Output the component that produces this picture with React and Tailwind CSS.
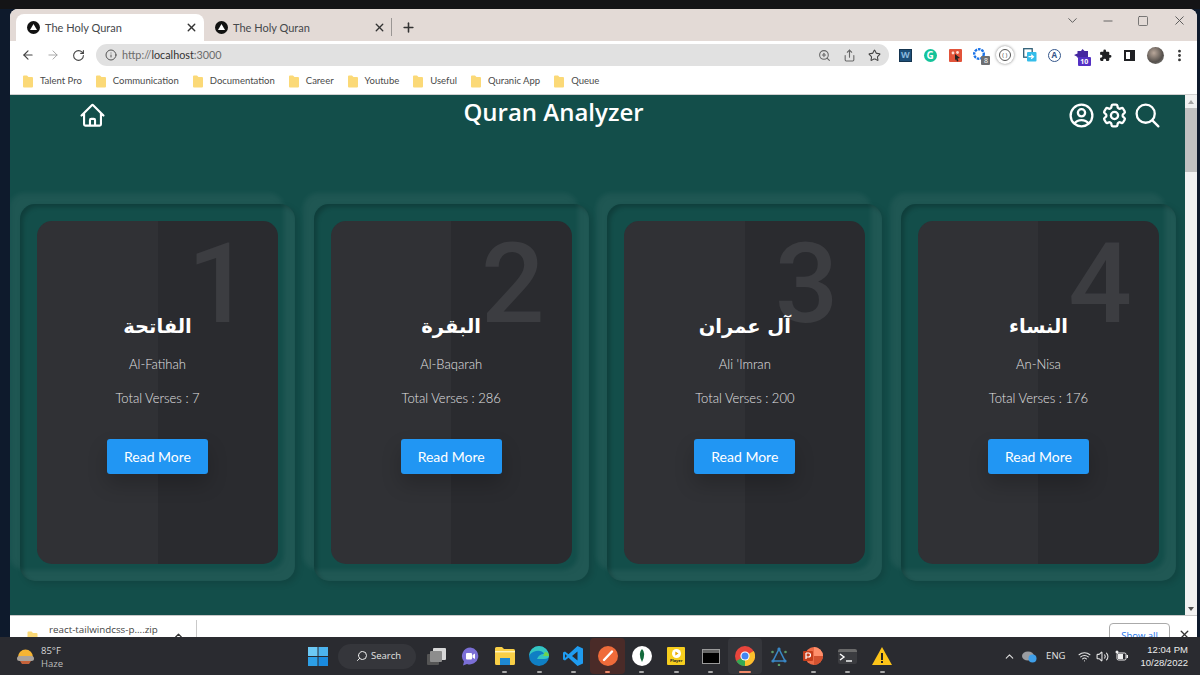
import React from 'react';
import { ArrowLeft, ArrowRight, ChevronDown, ChevronUp, Info, Minus, MoreVertical, Plus, RotateCw, Search, Share, Square, Star, Volume2, Wifi, X, ZoomIn } from 'lucide-react';
import { HiOutlineCog6Tooth, HiOutlineHome, HiOutlineMagnifyingGlass, HiOutlineUserCircle } from 'react-icons/hi2';

const bookmarks = ['Talent Pro', 'Communication', 'Documentation', 'Career', 'Youtube', 'Useful', 'Quranic App', 'Queue'];

const surahs = [
    { n: 1, ar: 'الفاتحة', en: 'Al-Fatihah', verses: 7 },
    { n: 2, ar: 'البقرة', en: 'Al-Baqarah', verses: 286 },
    { n: 3, ar: 'آل عمران', en: "Ali 'Imran", verses: 200 },
    { n: 4, ar: 'النساء', en: 'An-Nisa', verses: 176 },
];

function Favicon() {
    return (
        <svg width="13" height="13" viewBox="0 0 13 13" className="shrink-0">
            <circle cx="6.5" cy="6.5" r="6.5" fill="#111" />
            <path d="M6.5 3 L10 9 H3 Z" fill="#fff" />
        </svg>
    );
}

function Tab({ active }) {
    return (
        <div className={`flex items-center w-[188px] h-[27px] pl-[11px] pr-[6px] rounded-t-lg ${active ? 'bg-white' : ''}`}>
            <Favicon />
            <span className="ml-[5px] pt-[1px] text-[11px] text-[#45484c] flex-1 font-['Lato',sans-serif]">The Holy Quran</span>
            <X size={13} strokeWidth={2.5} className="text-[#333]" />
        </div>
    );
}

function Folder({ small }) {
    return (
        <svg width={small ? 13 : 10} height="13" viewBox="0 0 10 13" className="shrink-0">
            <path d="M0 1.5 Q0 .5 1 .5 H4 L5.5 2 H9 Q10 2 10 3 V11.5 Q10 12.5 9 12.5 H1 Q0 12.5 0 11.5 Z" fill="#fbd977" />
        </svg>
    );
}

function Extensions() {
    return (
        <div className="flex items-center ml-auto h-[26px] relative w-[299px]">
            <div className="flex items-center justify-center w-[25px] h-[25px]">
                <div className="w-[13px] h-[13px] bg-[#1d4f79] text-[9px] font-bold text-[#8ab8dd] flex items-center justify-center border border-[#14344f]">W</div>
            </div>
            <div className="flex items-center justify-center w-[25px] h-[25px]">
                <div className="w-[13px] h-[13px] rounded-full bg-[#15c39a] text-[10px] font-bold text-white flex items-center justify-center leading-none">G</div>
            </div>
            <div className="flex items-center justify-center w-[25px] h-[25px]">
                <svg width="13" height="13" viewBox="0 0 13 13">
                    <rect width="13" height="13" rx="1" fill="#e2533a" />
                    <circle cx="4" cy="4" r="1.4" fill="#fbdcd2" />
                    <circle cx="8.5" cy="3.5" r="1.4" fill="#fbdcd2" />
                    <path d="M6 5 L11 9 L8.5 9.6 L9.5 12 L8 12.4 L7 10 L6 11.5 Z" fill="#222" />
                </svg>
            </div>
            <div className="flex items-center justify-center w-[25px] h-[25px] relative">
                <svg width="16" height="16" viewBox="0 0 16 16">
                    <circle cx="7" cy="7" r="4.8" fill="none" stroke="#1a73e8" strokeWidth="2.4" strokeDasharray="2.6 .9" />
                </svg>
                <span className="absolute left-[14px] top-[13px] w-[9px] h-[9px] bg-[#6d6f72] text-white text-[7px] leading-[9px] text-center rounded-[1px]">8</span>
            </div>
            <div className="flex items-center justify-center w-[25px] h-[25px]">
                <div className="w-[18px] h-[18px] rounded-full bg-white shadow-[0_0_3px_rgba(0,0,0,0.5)] flex items-center justify-center">
                    <div className="w-[12px] h-[12px] rounded-full border border-[#555] flex items-center justify-center text-[6px] text-[#444] leading-none">( )</div>
                </div>
            </div>
            <div className="flex items-center justify-center w-[25px] h-[25px]">
                <svg width="14" height="14" viewBox="0 0 14 14">
                    <rect x=".7" y=".7" width="8.5" height="8.5" fill="none" stroke="#2f5f77" strokeWidth="1.3" />
                    <rect x="4" y="4" width="9.5" height="9.5" rx="1" fill="#35bdea" />
                    <path d="M5.5 8.7 H10 M8.2 6.7 L10.5 8.7 L8.2 10.7" fill="none" stroke="#fff" strokeWidth="1.2" />
                </svg>
            </div>
            <div className="flex items-center justify-center w-[25px] h-[25px]">
                <div className="w-[13px] h-[13px] rounded-full border border-[#34568b] flex items-center justify-center text-[8px] font-bold text-[#34568b] leading-none">A</div>
            </div>
            <div className="flex items-center justify-center w-[28px] h-[25px] relative">
                <svg width="14" height="13" viewBox="0 0 14 13">
                    <path d="M0 6 L3.5 4.5 L3.5 2 L7 2 L8.5 0 L10.5 2 L14 2 L14 9 L3.5 9 L3.5 8 Z" fill="#4527a0" />
                </svg>
                <span className="absolute left-[11px] top-[14px] w-[13px] h-[9px] bg-[#5431c4] text-white text-[7px] font-bold leading-[9px] text-center rounded-[1px]">10</span>
            </div>
            <div className="flex items-center justify-center w-[22px] h-[25px]">
                <svg width="13" height="13" viewBox="0 0 24 24" fill="#202124">
                    <path d="M20.5 11H19V7a2 2 0 0 0-2-2h-4V3.5a2.5 2.5 0 0 0-5 0V5H4a2 2 0 0 0-2 2v3.8h1.5a2.7 2.7 0 0 1 0 5.4H2V20a2 2 0 0 0 2 2h3.8v-1.5a2.7 2.7 0 0 1 5.4 0V22H17a2 2 0 0 0 2-2v-4h1.5a2.5 2.5 0 0 0 0-5z" />
                </svg>
            </div>
            <div className="flex items-center justify-center w-[27px] h-[25px]">
                <div className="w-[11px] h-[11px] border-2 border-[#202124] border-r-[5px]" />
            </div>
            <div className="flex items-center justify-center w-[24px] h-[25px]">
                <div className="w-[17px] h-[17px] rounded-full bg-[radial-gradient(circle_at_40%_35%,#b9a79a,#55504c_60%,#8c8f8d)]" />
            </div>
            <div className="flex items-center justify-center w-[25px] h-[25px]">
                <MoreVertical size={15} strokeWidth={2.5} className="text-[#333]" />
            </div>
        </div>
    );
}

function Card({ surah }) {
    return (
        <div className="w-[275px] h-[377px] shrink-0 p-[17px] rounded-[15px] shadow-[inset_3px_3px_4px_rgba(0,0,0,0.2),inset_-11px_-11px_5px_rgba(255,255,255,0.06),3px_3px_6px_rgba(0,0,0,0.12),-11px_-11px_5px_rgba(255,255,255,0.05)]">
            <div className="relative h-full rounded-[15px] bg-[#2a2b2f] flex flex-col items-center font-['Lato',sans-serif]">
                <div className="absolute inset-y-0 left-0 w-1/2 rounded-l-[15px] bg-white/[0.03]" />
                <div className="absolute right-[27px] top-[13px] text-[112px] leading-[100px] font-medium text-[#3c3d41] font-['Roboto',sans-serif]">
                    {surah.n}
                </div>
                <h2 dir="rtl" className="relative mt-[88px] h-[36px] text-[19.5px] leading-[36px] font-semibold text-white font-['DejaVu_Sans',sans-serif]">
                    {surah.ar}
                </h2>
                <p className="relative mt-[9px] text-[13px] leading-[20px] font-light text-[#e2e2e4]">{surah.en}</p>
                <p className="relative mt-[14px] text-[13px] leading-[20px] font-light text-[#e2e2e4]">Total Verses : {surah.verses}</p>
                <button className="relative mt-[31px] w-[101px] h-[35px] rounded-[3px] bg-[#2196f3] text-white text-[14px] shadow-[0_10px_20px_rgba(0,0,0,0.2)]">
                    Read More
                </button>
            </div>
        </div>
    );
}

function TaskIcon({ children, bar, bg }) {
    return (
        <div className={`relative flex items-center justify-center w-[34.3px] h-[36px] rounded ${bg || ''}`}>
            {children}
            {bar && <span className={`absolute bottom-[1px] h-[2px] rounded-sm ${bar}`} />}
        </div>
    );
}

function Taskbar() {
    return (
        <div className="h-[38px] bg-[#2a2b30] flex items-center text-[#e8e8e8] relative">
            <div className="w-[308px] flex items-center pl-[16px] shrink-0">
                <svg width="19" height="17" viewBox="0 0 19 17">
                    <path d="M2 9 A7 7 0 0 1 17 9 Z" fill="#f5b433" />
                    <rect x="1" y="8" width="17" height="5" rx="2.5" fill="#aaa39c" />
                    <path d="M4 13 H15 L13 16 H6 Z" fill="#c4623a" />
                </svg>
                <div className="ml-[6px] text-[9.5px] leading-[13px] text-[#d8d8d8] pt-[1px]">
                    <div>85°F</div>
                    <div className="text-[#bdbdbd]">Haze</div>
                </div>
            </div>
            <svg width="20" height="19" viewBox="0 0 20 19" className="shrink-0">
                <rect width="9.5" height="9" fill="#6cc9f5" />
                <rect x="10.5" width="9.5" height="9" fill="#4cb4ef" />
                <rect y="10" width="9.5" height="9" fill="#2d9fe6" />
                <rect x="10.5" y="10" width="9.5" height="9" fill="#1a8be0" />
            </svg>
            <div className="ml-[10px] w-[78px] h-[25px] rounded-full bg-[#35363b] flex items-center pl-[18px] shrink-0">
                <Search size={12} strokeWidth={2} className="-scale-x-100 text-[#eee]" />
                <span className="ml-[3px] text-[9.5px] text-[#e4e4e4]">Search</span>
            </div>
            <div className="ml-[3px] flex items-center">
                <TaskIcon>
                    <svg width="19" height="17" viewBox="0 0 19 17">
                        <rect x="0" y="6" width="12" height="11" rx="1" fill="#555" />
                        <rect x="6" y="0" width="13" height="12" rx="1" fill="#d8d8d8" />
                        <rect x="3" y="3" width="12" height="11" rx="1" fill="#8d8d8d" />
                    </svg>
                </TaskIcon>
                <TaskIcon>
                    <svg width="19" height="19" viewBox="0 0 19 19">
                        <path d="M9.5 .5 A8.5 8.5 0 1 1 6 17 L2 18.5 L3 14.5 A8.5 8.5 0 0 1 9.5 .5 Z" fill="#7b6fd6" />
                        <rect x="5" y="6" width="6" height="6.5" rx="1" fill="#fff" />
                        <path d="M11.5 8 L14 6.5 V12 L11.5 10.5 Z" fill="#fff" />
                    </svg>
                </TaskIcon>
                <TaskIcon bar="w-[5px] bg-[#a8a8a8]">
                    <svg width="20" height="18" viewBox="0 0 20 18">
                        <path d="M0 1.5 Q0 0 1.5 0 H7 L9 2 H18.5 Q20 2 20 3.5 V16.5 Q20 18 18.5 18 H1.5 Q0 18 0 16.5 Z" fill="#f9cf47" />
                        <rect x="0" y="4" width="20" height="1.4" fill="#fff2b8" />
                        <rect x="5" y="11" width="10" height="7" fill="#1e88d2" />
                    </svg>
                </TaskIcon>
                <TaskIcon bar="w-[5px] bg-[#a8a8a8]">
                    <svg width="20" height="20" viewBox="0 0 20 20">
                        <circle cx="10" cy="10" r="10" fill="#0f7fc4" />
                        <path d="M10 0 A10 10 0 0 1 20 10 Q20 13 15 13 H8 Q10 8 15 8 Q13 4 7 5 Q2 6 0 10 A10 10 0 0 1 10 0 Z" fill="#35c6c0" />
                        <path d="M20 10 Q20 6 16 6 L14 10 H20 Z" fill="#6ed34c" />
                    </svg>
                </TaskIcon>
                <TaskIcon bar="w-[5px] bg-[#a8a8a8]">
                    <svg width="20" height="20" viewBox="0 0 20 20">
                        <path d="M14.5 0 L20 2.6 V17.4 L14.5 20 L5.5 11.8 L2 14.6 L0 13.4 V6.6 L2 5.4 L5.5 8.2 Z M14.5 5.5 L9 10 L14.5 14.5 Z M2 8 V12 L4 10 Z" fill="#1f9cf0" fillRule="evenodd" />
                    </svg>
                </TaskIcon>
                <TaskIcon bar="w-[5px] bg-[#f08a6a]" bg="bg-[#4a2b28]">
                    <svg width="20" height="20" viewBox="0 0 20 20">
                        <circle cx="10" cy="10" r="10" fill="#ef6b3a" />
                        <path d="M6 14 L14 5.5" stroke="#fff" strokeWidth="2.4" strokeLinecap="round" />
                    </svg>
                </TaskIcon>
                <TaskIcon bar="w-[5px] bg-[#a8a8a8]">
                    <svg width="20" height="20" viewBox="0 0 20 20">
                        <circle cx="10" cy="10" r="10" fill="#fff" />
                        <path d="M10 3 Q14.5 7 10 16 Q5.5 7 10 3 Z" fill="#136b3c" />
                    </svg>
                </TaskIcon>
                <TaskIcon bar="w-[5px] bg-[#a8a8a8]">
                    <div className="w-[18px] h-[18px] bg-[#f7ce1e] flex flex-col items-center justify-center rounded-[1px]">
                        <svg width="9" height="9" viewBox="0 0 9 9">
                            <circle cx="4.5" cy="4.5" r="4.5" fill="#fff" />
                            <path d="M3.3 2.4 L6.5 4.5 L3.3 6.6 Z" fill="#e8a800" />
                        </svg>
                        <span className="text-[4px] leading-[5px] text-[#222] font-bold">Player</span>
                    </div>
                </TaskIcon>
                <TaskIcon bar="w-[5px] bg-[#a8a8a8]">
                    <div className="w-[18px] h-[15px] bg-black border border-[#9a9a9a]">
                        <div className="h-[3px] bg-[#666]" />
                    </div>
                </TaskIcon>
                <TaskIcon bar="w-[12px] bg-[#f08a6a]" bg="bg-[#35363b]">
                    <svg width="20" height="20" viewBox="0 0 20 20">
                        <circle cx="10" cy="10" r="10" fill="#e8453c" />
                        <path d="M10 10 L18.7 5 A10 10 0 0 1 10 20 Z" fill="#fbc02d" />
                        <path d="M10 10 L10 20 A10 10 0 0 1 1.3 15 Z" fill="#34a853" />
                        <circle cx="10" cy="10" r="4.6" fill="#fff" />
                        <circle cx="10" cy="10" r="3.5" fill="#4285f4" />
                    </svg>
                </TaskIcon>
                <TaskIcon>
                    <svg width="20" height="20" viewBox="0 0 20 20">
                        <path d="M10 3 L16 15 H4 Z" fill="none" stroke="#3a87c5" strokeWidth="1.6" />
                        <circle cx="10" cy="3" r="1.6" fill="#3a87c5" />
                        <circle cx="4" cy="15" r="1.6" fill="#3a87c5" />
                        <circle cx="16" cy="15" r="1.6" fill="#3a87c5" />
                        <circle cx="3.5" cy="6" r="1.3" fill="#5b9b6b" />
                        <circle cx="16.5" cy="6" r="1.3" fill="#5b9b6b" />
                        <circle cx="10" cy="19" r="1.3" fill="#5b9b6b" />
                    </svg>
                </TaskIcon>
                <TaskIcon bar="w-[5px] bg-[#a8a8a8]">
                    <svg width="20" height="20" viewBox="0 0 20 20">
                        <circle cx="11" cy="10" r="9" fill="#ed6c47" />
                        <path d="M11 1 A9 9 0 0 1 20 10 H11 Z" fill="#ff8f6b" />
                        <path d="M11 10 H20 A9 9 0 0 1 11 19 Z" fill="#d35230" />
                        <rect x="0" y="5" width="10" height="10" rx="1" fill="#c43e1c" />
                        <path d="M3 7 V13 M3 7 H5.5 Q7.5 7 7.5 9 Q7.5 11 5.5 11 H3" fill="none" stroke="#fff" strokeWidth="1.2" />
                    </svg>
                </TaskIcon>
                <TaskIcon bar="w-[5px] bg-[#a8a8a8]">
                    <div className="w-[19px] h-[15px] bg-[#3b3c40] rounded-[2px] relative border-t-[3px] border-[#6a6a6a]">
                        <svg width="19" height="12" viewBox="0 0 19 12" className="absolute top-0 left-0">
                            <path d="M2 2 L6 5 L2 8" fill="none" stroke="#fff" strokeWidth="1.4" />
                            <path d="M8 9 H14" stroke="#fff" strokeWidth="1.4" />
                        </svg>
                    </div>
                </TaskIcon>
                <TaskIcon bar="w-[5px] bg-[#a8a8a8]">
                    <svg width="20" height="18" viewBox="0 0 20 18">
                        <path d="M10 0 L20 18 H0 Z" fill="#fcc419" />
                        <rect x="9" y="6" width="2" height="7" fill="#222" />
                        <rect x="9" y="14" width="2" height="2" fill="#222" />
                    </svg>
                </TaskIcon>
            </div>
            <div className="ml-auto flex items-center h-full pr-[12px]">
                <ChevronUp size={13} className="text-[#ddd]" />
                <svg width="15" height="13" viewBox="0 0 15 13" className="ml-[6px]">
                    <ellipse cx="6" cy="6" rx="6" ry="4.5" fill="#9a9ca0" />
                    <circle cx="10.5" cy="8.5" r="4" fill="#3f9fe8" />
                </svg>
                <span className="ml-[9px] mt-[1px] text-[9.5px] text-[#e4e4e4]">ENG</span>
                <Wifi size={13} className="ml-[13px] text-[#e4e4e4]" />
                <Volume2 size={13} className="ml-[5px] text-[#e4e4e4]" />
                <svg width="13" height="12" viewBox="0 0 13 12" className="ml-[6px]">
                    <rect x="2" y="3" width="9" height="7" rx="1.5" fill="none" stroke="#eee" />
                    <rect x="3" y="4" width="5" height="5" fill="#eee" />
                    <circle cx="2" cy="2" r="1.5" fill="#eee" />
                    <rect x="11.5" y="5" width="1.5" height="3" fill="#eee" />
                </svg>
                <div className="ml-[12px] text-right text-[9.5px] leading-[13px] text-[#ececec] font-['Liberation_Sans',sans-serif]">
                    <div>12:04 PM</div>
                    <div>10/28/2022</div>
                </div>
            </div>
        </div>
    );
}

export default function App() {
    return (
        <div className="w-[1200px] h-[675px] overflow-hidden flex flex-col bg-[#0e1a2c] font-['Open_Sans',sans-serif]">
            <div className="h-[9px] bg-[#141416] shrink-0" />
            <div className="flex-1 min-h-0 pl-[10px] pr-[3px]">
                <div className="h-full flex flex-col rounded-t-lg overflow-hidden bg-white">
                    {/* tab strip */}
                    <div className="h-[32px] shrink-0 bg-[#e3dad6] flex items-end pl-[6px] relative">
                        <Tab active />
                        <Tab />
                        <div className="w-px h-[18px] bg-[#9a9694] mb-[5px] -ml-[1px]" />
                        <Plus size={15} strokeWidth={2.5} className="ml-[9px] mb-[6px] text-[#333]" />
                        <div className="ml-auto self-start mt-[4px] flex items-center text-[#555] pr-[10px]">
                            <ChevronDown size={15} strokeWidth={1.5} />
                            <Minus size={14} strokeWidth={1.5} className="ml-[21px]" />
                            <Square size={12} strokeWidth={1.5} className="ml-[22px]" />
                            <X size={15} strokeWidth={1.5} className="ml-[23px]" />
                        </div>
                    </div>
                    {/* toolbar */}
                    <div className="h-[27px] shrink-0 flex items-center pl-[11px] pr-[5px] pt-[1px]">
                        <ArrowLeft size={14} strokeWidth={2} className="text-[#444]" />
                        <ArrowRight size={14} strokeWidth={1.5} className="ml-[11px] text-[#9b9b9b]" />
                        <RotateCw size={13} strokeWidth={2} className="ml-[12px] text-[#444]" />
                        <div className="ml-[11px] w-[793px] h-[22px] rounded-full bg-[#e1e1e1] flex items-center pl-[9px] pr-[8px] shrink-0">
                            <Info size={12} className="text-[#555]" />
                            <span className="ml-[5px] text-[10.8px] text-[#6b6b6b] font-['Lato',sans-serif]">http://<span className="text-[#333]">localhost</span>:3000</span>
                            <div className="ml-auto flex items-center gap-[12px] text-[#666]">
                                <ZoomIn size={13} />
                                <Share size={13} />
                                <Star size={13} className="text-[#444]" />
                            </div>
                        </div>
                        <Extensions />
                    </div>
                    {/* bookmarks */}
                    <div className="h-[27px] shrink-0 flex items-center pl-[13px] gap-[14px] border-b border-[#d0d0d0]">
                        {bookmarks.map((b) => (
                            <div key={b} className="flex items-center gap-[7px]">
                                <Folder />
                                <span className="text-[9.5px] text-[#4a4a4a] font-['Lato',sans-serif]">{b}</span>
                            </div>
                        ))}
                    </div>
                    {/* page */}
                    <div className="flex-1 min-h-0 flex">
                        <div className="flex-1 min-w-0 bg-[#134e4a] overflow-hidden">
                            <div className="flex items-center h-[36px] pl-[69px] pr-[23px] pt-[4px] text-white [&_path]:stroke-[1.9]">
                                <HiOutlineHome size={27} />
                                <h1 className="flex-1 text-center pr-[66px] pb-[6px] text-[24px] leading-[32px] font-semibold">Quran Analyzer</h1>
                                <div className="flex items-center gap-[4px]">
                                    <HiOutlineUserCircle size={29} />
                                    <HiOutlineCog6Tooth size={29} />
                                    <HiOutlineMagnifyingGlass size={29} />
                                </div>
                            </div>
                            <div className="flex gap-[18.67px] pl-[10px] mt-[73px]">
                                {surahs.map((s) => <Card key={s.n} surah={s} />)}
                            </div>
                        </div>
                        {/* scrollbar */}
                        <div className="w-[12px] shrink-0 bg-[#f1f1f1] flex flex-col items-center">
                            <div className="h-[13px] flex items-center"><div className="border-x-[3px] border-x-transparent border-b-[4px] border-b-[#a3a3a3]" /></div>
                            <div className="w-full h-[64px] bg-[#c1c1c1]" />
                            <div className="mt-auto h-[13px] flex items-center"><div className="border-x-[3px] border-x-transparent border-t-[4px] border-t-[#505050]" /></div>
                        </div>
                    </div>
                    {/* downloads */}
                    <div className="h-[22px] shrink-0 border-t border-[#c8c8c8] flex pl-[16px] relative overflow-hidden">
                        <div className="pt-[15px]"><Folder small /></div>
                        <span className="ml-[10px] mt-[7px] text-[9.8px] leading-[13px] text-[#444]">react-tailwindcss-p....zip</span>
                        <ChevronUp size={11} strokeWidth={3} className="ml-[15px] mt-[14px] text-[#333]" />
                        <div className="ml-[12px] mt-[4px] w-px h-[18px] bg-[#c9c9c9]" />
                        <div className="ml-auto mt-[7px] w-[61px] h-[24px] rounded border border-[#aaa] text-center text-[9.5px] leading-[24px] text-[#1a73e8]">Show all</div>
                        <X size={13} strokeWidth={2.5} className="ml-[8px] mr-[6px] mt-[12px] text-[#333]" />
                    </div>
                </div>
            </div>
            <Taskbar />
        </div>
    );
}
